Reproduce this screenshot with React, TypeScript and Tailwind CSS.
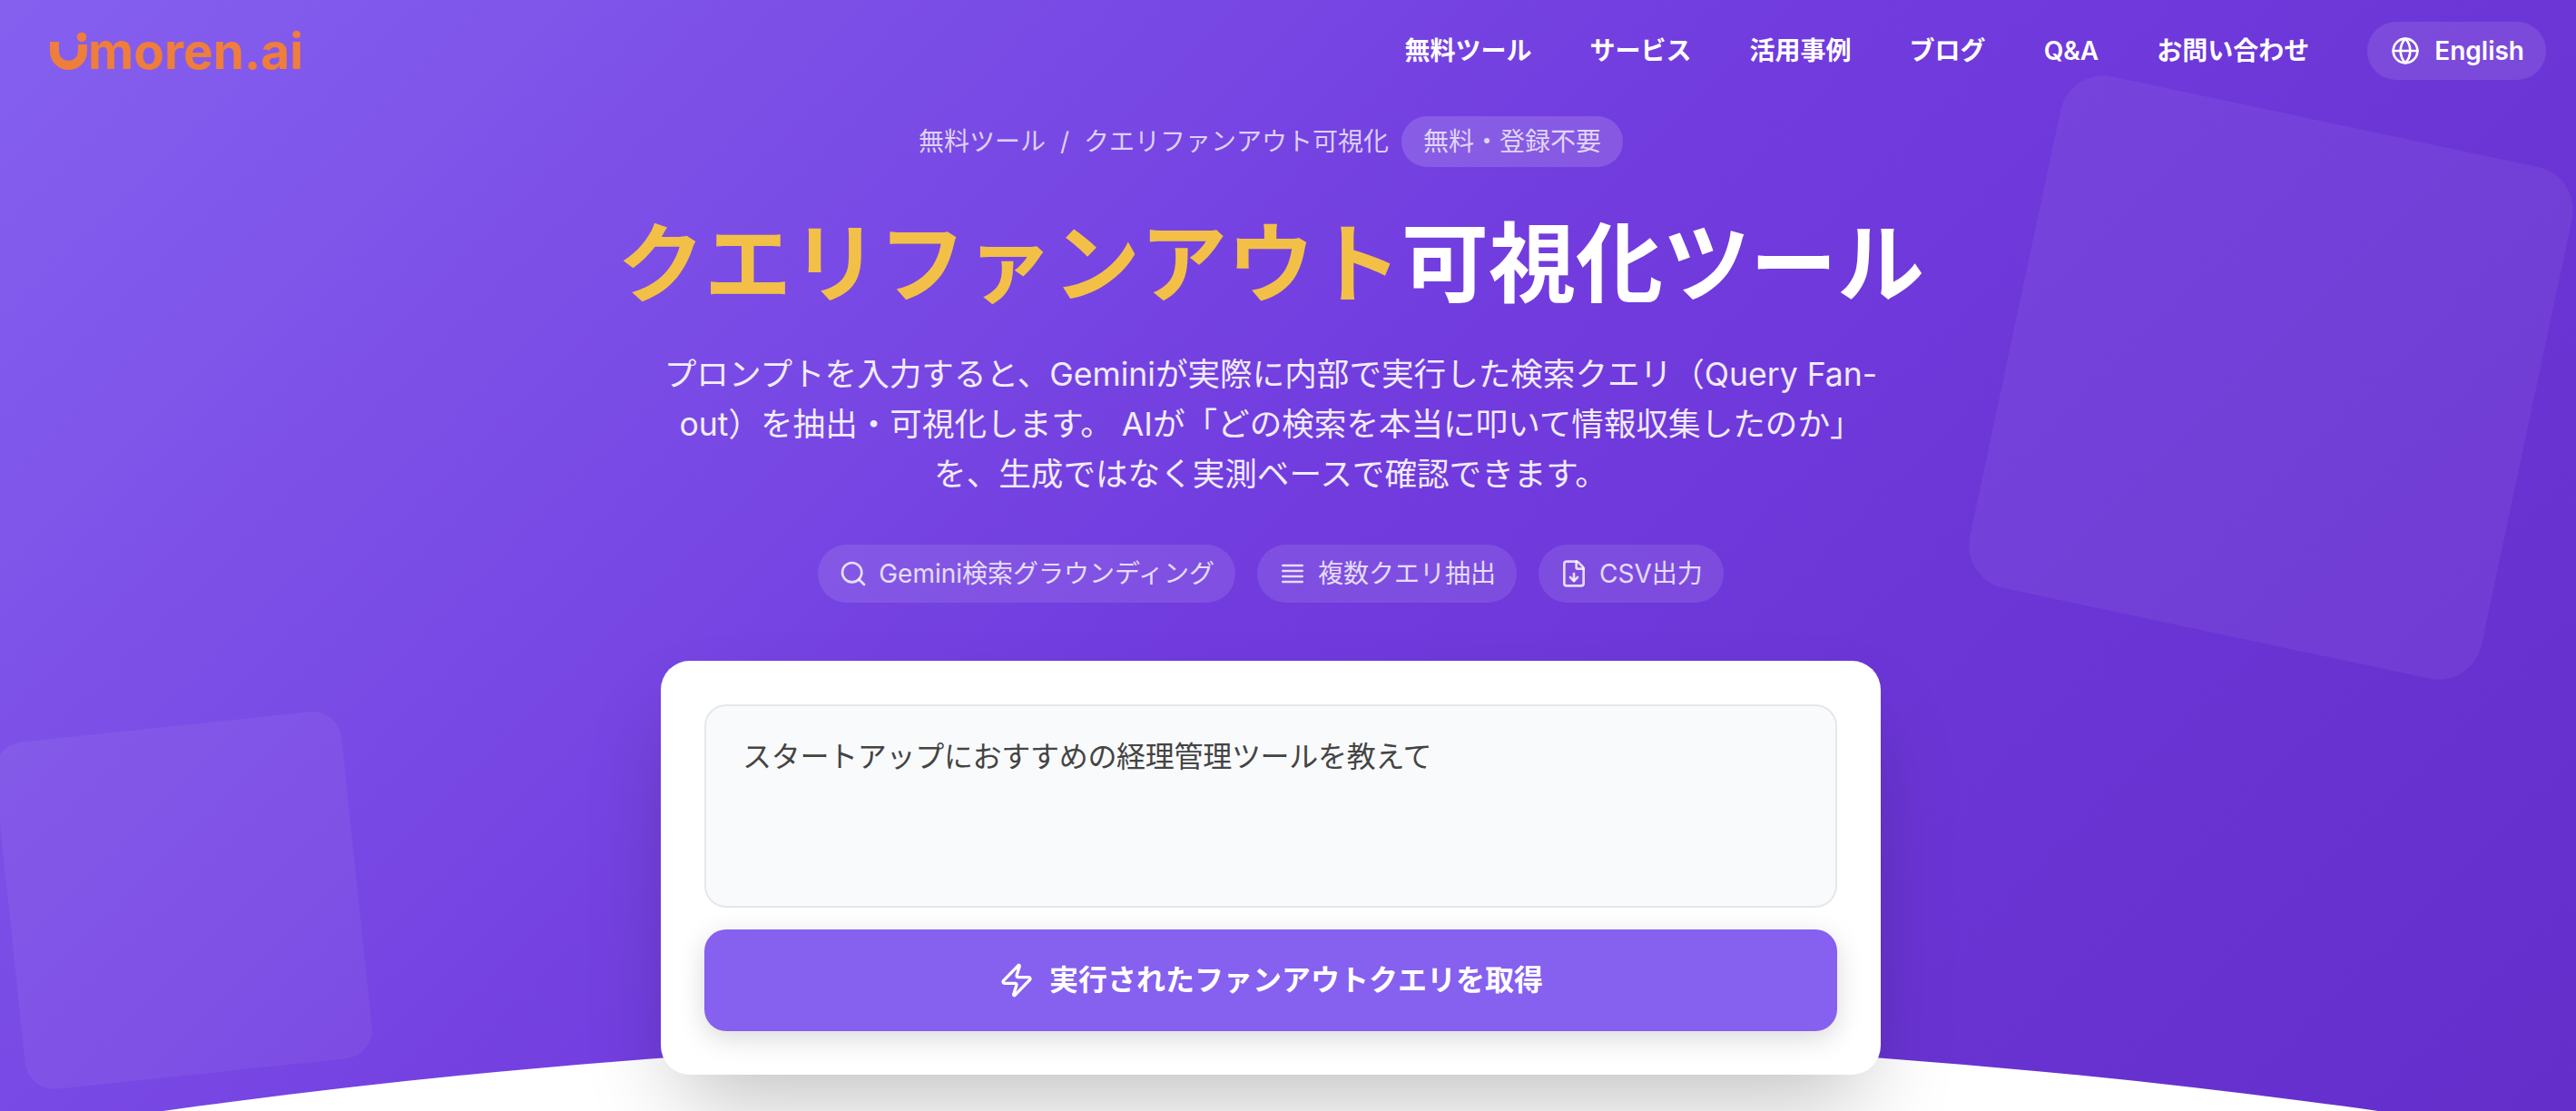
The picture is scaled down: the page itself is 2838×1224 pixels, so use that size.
import { FileDown, Globe, Search, Zap } from 'lucide-react';

const navItems = ['無料ツール', 'サービス', '活用事例', 'ブログ', 'Q&A', 'お問い合わせ'];

function Logo() {
  return (
    <div className="flex items-center text-[#ef7d3c]">
      <svg width="44" height="44" viewBox="0 0 44 44" fill="none">
        <path d="M5 12V22.5a15.5 15.5 0 0 0 31 0V15" stroke="currentColor" strokeWidth="10" />
        <circle cx="35" cy="6.7" r="5.3" fill="currentColor" />
      </svg>
      <span className="ml-[-2px] text-[55px] leading-none font-bold">moren.ai</span>
    </div>
  );
}

function LinesIcon() {
  return (
    <svg width="32" height="32" viewBox="0 0 24 24" fill="none" stroke="currentColor" strokeWidth="2" strokeLinecap="round">
      <path d="M4 5.25h16M4 9.75h16M4 14.25h16M4 18.75h16" />
    </svg>
  );
}

function Chip({ icon, label }: { icon: React.ReactNode; label: string }) {
  return (
    <div className="flex h-16 items-center gap-3 rounded-full bg-white/10 px-[23px] text-[28px] text-white/80">
      {icon}
      <span>{label}</span>
    </div>
  );
}

export default function App() {
  return (
    <div className="relative h-[1224px] w-full overflow-hidden bg-[linear-gradient(135deg,#8560ef_0%,#713bde_50%,#642ecb_100%)] font-['Inter','Noto_Sans_CJK_JP',sans-serif] text-white">
      <div className="absolute top-[128px] right-[48px] h-[576px] w-[576px] rotate-12 rounded-[48px] bg-white/5" />
      <div className="absolute top-[800px] left-[10px] h-[384px] w-[384px] -rotate-6 rounded-[32px] bg-white/5" />
      <div className="absolute top-[1141px] left-[-2100px] h-[2646px] w-[7000px] rounded-[50%] bg-white" />

      <header className="relative flex items-center justify-between pt-6 pr-[33px] pl-[55px]">
        <Logo />
        <nav className="flex items-center gap-16 text-[28px] font-semibold">
          {navItems.map((item) => (
            <a key={item}>{item}</a>
          ))}
          <button className="flex h-16 items-center gap-4 rounded-full bg-white/10 pr-6 pl-[26px]">
            <Globe size={32} strokeWidth={2} />
            English
          </button>
        </nav>
      </header>

      <main className="relative flex w-[2800px] flex-col items-center">
        <div className="mt-10 flex h-14 items-center text-[28px] text-white/75">
          <span>無料ツール</span>
          <span className="mx-4">/</span>
          <span>クエリファンアウト可視化</span>
          <span className="ml-[14px] flex h-14 items-center rounded-full bg-white/15 px-6">無料・登録不要</span>
        </div>

        <h1 className="mt-[34px] text-[96px] leading-[144px] font-bold">
          <span className="text-[#f3c047]">クエリファンアウト</span>可視化ツール
        </h1>

        <p className="mt-[23px] w-[1344px] text-center text-[35.6px] leading-[55px] text-white/90">
          プロンプトを入力すると、Geminiが実際に内部で実行した検索クエリ（Query Fan-out）を抽出・可視化します。 AIが「どの検索を本当に叩いて情報収集したのか」を、生成ではなく実測ベースで確認できます。
        </p>

        <div className="mt-[50px] flex gap-6">
          <Chip icon={<Search size={32} />} label="Gemini検索グラウンディング" />
          <Chip icon={<LinesIcon />} label="複数クエリ抽出" />
          <Chip icon={<FileDown size={32} />} label="CSV出力" />
        </div>

        <section className="mt-16 flex w-[1344px] flex-col gap-6 rounded-[32px] bg-white p-12 shadow-[0_50px_100px_-24px_rgba(0,0,0,0.25)]">
          <textarea
            readOnly
            className="h-[224px] w-full resize-none rounded-3xl border-2 border-[#e5e7eb] bg-[#f9fafb] px-10 py-[32px] text-[32px] leading-[48px] tracking-[-0.3px] text-[#444444] outline-none"
            value="スタートアップにおすすめの経理管理ツールを教えて"
          />
          <button className="flex h-28 w-full items-center justify-center gap-4 rounded-3xl bg-[#8660ef] text-[32px] font-bold shadow-[0_8px_30px_rgba(0,0,0,0.15)]">
            <Zap size={40} />
            実行されたファンアウトクエリを取得
          </button>
        </section>
      </main>
    </div>
  );
}
